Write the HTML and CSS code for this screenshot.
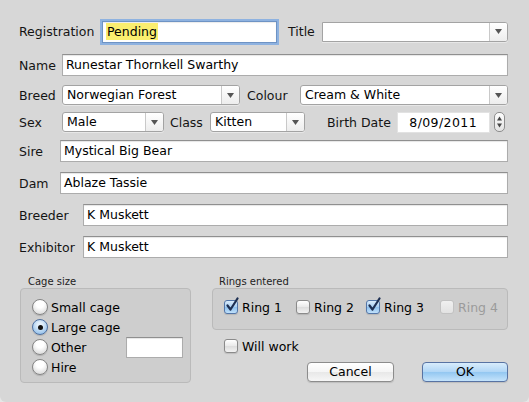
FILE: index.html
```html
<!DOCTYPE html>
<html>
<head>
<meta charset="utf-8">
<link rel="stylesheet" href="styles.css">
</head>
<body>
<div class="dialog">
  <div class="row r1">
    <span class="lbl w-reg">Registration</span>
    <div class="field focus reg"><span class="hl">Pending</span></div>
    <span class="lbl title-lbl">Title</span>
    <div class="popup combo grow">
      <span class="popup-text"></span>
      <span class="popup-arrow"><svg width="7" height="5" viewBox="0 0 7 5"><path d="M0 0H7L3.5 5Z" fill="#555"/></svg></span>
    </div>
  </div>
  <div class="row r2">
    <span class="lbl w-43">Name</span>
    <div class="field grow">Runestar Thornkell Swarthy</div>
  </div>
  <div class="row r3">
    <span class="lbl w-43">Breed</span>
    <div class="popup breed">
      <span class="popup-text">Norwegian Forest</span>
      <span class="popup-arrow"><svg width="7" height="5" viewBox="0 0 7 5"><path d="M0 0H7L3.5 5Z" fill="#555"/></svg></span>
    </div>
    <span class="lbl colour-lbl">Colour</span>
    <div class="popup grow">
      <span class="popup-text">Cream &amp; White</span>
      <span class="popup-arrow"><svg width="7" height="5" viewBox="0 0 7 5"><path d="M0 0H7L3.5 5Z" fill="#555"/></svg></span>
    </div>
  </div>
  <div class="row r4">
    <span class="lbl w-43">Sex</span>
    <div class="popup sex">
      <span class="popup-text">Male</span>
      <span class="popup-arrow"><svg width="7" height="5" viewBox="0 0 7 5"><path d="M0 0H7L3.5 5Z" fill="#555"/></svg></span>
    </div>
    <span class="lbl class-lbl">Class</span>
    <div class="popup klass">
      <span class="popup-text">Kitten</span>
      <span class="popup-arrow"><svg width="7" height="5" viewBox="0 0 7 5"><path d="M0 0H7L3.5 5Z" fill="#555"/></svg></span>
    </div>
    <span class="lbl bd-lbl">Birth Date</span>
    <div class="datefield">8/09/2011</div>
    <div class="stepper">
      <svg width="11" height="18" viewBox="0 0 11 18"><path d="M3 7.5H8L5.5 3.5Z" fill="#444"/><path d="M3 10.5H8L5.5 14.5Z" fill="#444"/></svg>
    </div>
  </div>
  <div class="row r5">
    <span class="lbl w-41">Sire</span>
    <div class="field grow">Mystical Big Bear</div>
  </div>
  <div class="row r6">
    <span class="lbl w-41">Dam</span>
    <div class="field grow">Ablaze Tassie</div>
  </div>
  <div class="row r7">
    <span class="lbl w-64">Breeder</span>
    <div class="field grow">K Muskett</div>
  </div>
  <div class="row r8">
    <span class="lbl w-64">Exhibitor</span>
    <div class="field grow">K Muskett</div>
  </div>

  <div class="bottom">
    <div class="cage-col">
      <div class="group-lbl cage-lbl">Cage size</div>
      <div class="group cage-box">
        <div class="radio-row"><span class="radio"></span><span class="opt">Small cage</span></div>
        <div class="radio-row"><span class="radio on"><span class="dot"></span></span><span class="opt">Large cage</span></div>
        <div class="radio-row"><span class="radio"></span><span class="opt">Other</span><div class="field small"></div></div>
        <div class="radio-row"><span class="radio"></span><span class="opt">Hire</span></div>
      </div>
    </div>
    <div class="right-col">
      <div class="group-lbl rings-lbl">Rings entered</div>
      <div class="group rings-box">
        <div class="ck-item"><span class="ck on"><svg class="tick" width="14" height="16" viewBox="0 0 14 16"><path d="M2.5 8.5L5.5 12.5L12.5 1.5" fill="none" stroke="#1d2f52" stroke-width="2.2" stroke-linecap="round" stroke-linejoin="round"/></svg></span><span class="opt">Ring 1</span></div>
        <div class="ck-item"><span class="ck"></span><span class="opt">Ring 2</span></div>
        <div class="ck-item"><span class="ck on"><svg class="tick" width="14" height="16" viewBox="0 0 14 16"><path d="M2.5 8.5L5.5 12.5L12.5 1.5" fill="none" stroke="#1d2f52" stroke-width="2.2" stroke-linecap="round" stroke-linejoin="round"/></svg></span><span class="opt">Ring 3</span></div>
        <div class="ck-item"><span class="ck dis"></span><span class="opt disabled">Ring 4</span></div>
      </div>
      <div class="willwork"><span class="ck"></span><span class="opt">Will work</span></div>
      <div class="buttons">
        <div class="btn">Cancel</div>
        <div class="btn ok">OK</div>
      </div>
    </div>
  </div>
</div>
</body>
</html>
```
FILE: styles.css
```css
html, body {
  margin: 0;
  padding: 0;
}
body {
  background: #e6e6e6;
  font-family: "DejaVu Sans", "Liberation Sans", sans-serif;
  font-size: 12.5px;
  color: #141414;
}
.dialog {
  width: 529px;
  height: 402px;
  box-sizing: border-box;
  background: #d7d7d7;
  border-radius: 0 0 6px 6px;
  padding: 20px 21px 0 19px;
  display: flex;
  flex-direction: column;
}
.row {
  display: flex;
  align-items: center;
}
.r1 { height: 23px; }
.r2 { height: 22px; margin-top: 11px; }
.r3 { height: 20px; margin-top: 9px; }
.r4 { height: 20px; margin-top: 7px; }
.r5 { height: 22px; margin-top: 8px; }
.r6, .r7, .r8 { height: 22px; margin-top: 10px; }

.lbl { flex: none; white-space: nowrap; }
.w-reg { width: 83px; }
.w-43 { width: 43px; }
.w-41 { width: 41px; }
.w-64 { width: 64px; }
.title-lbl { margin-left: 11px; width: 34px; }
.colour-lbl { margin-left: 7px; width: 53px; }
.class-lbl { margin-left: 6px; width: 40px; }
.bd-lbl { margin-left: 22px; width: 70px; }

.grow { flex: 1; }

.field {
  box-sizing: border-box;
  height: 22px;
  border: 1px solid #acacac;
  border-top-color: #8f8f8f;
  background: #fff;
  box-shadow: inset 0 1px 1px rgba(0,0,0,0.10);
  padding: 0 3px;
  line-height: 20px;
  white-space: nowrap;
  color: #000;
}
.field.focus {
  border-color: #6e93c4;
  box-shadow: 0 0 0 2px #8eb2e0, inset 0 1px 1px rgba(0,0,0,0.08);
}
.reg { width: 175px; }
.hl {
  background: #fbee6f;
  padding: 1px 1px;
}

.popup {
  box-sizing: border-box;
  display: flex;
  height: 20px;
  border: 1px solid #a3a3a3;
  border-radius: 3px;
  background: #fff;
  box-shadow: 0 1px 0 rgba(255,255,255,0.4);
}
.popup-text {
  flex: 1;
  padding-left: 4px;
  line-height: 18px;
  white-space: nowrap;
  color: #000;
}
.popup-arrow {
  flex: none;
  width: 17px;
  border-left: 1px solid #c9c9c9;
  border-radius: 0 2px 2px 0;
  background: linear-gradient(#ffffff, #ededed);
  display: flex;
  align-items: center;
  justify-content: center;
}
.combo { height: 20px; border-radius: 0 3px 3px 0; }
.breed { width: 178px; }
.sex { width: 102px; }
.klass { width: 95px; }

.datefield {
  box-sizing: border-box;
  width: 93px;
  height: 21px;
  background: #fff;
  border: 1px solid #e2e2e2;
  text-align: right;
  padding-right: 12px;
  line-height: 19px;
  color: #000;
  letter-spacing: 0.4px;
}
.stepper {
  box-sizing: border-box;
  margin-left: 4px;
  width: 11px;
  height: 20px;
  border: 1px solid #8d8d8d;
  border-radius: 5px;
  background: linear-gradient(#fdfdfd, #e3e3e3);
  display: flex;
  align-items: center;
  justify-content: center;
  overflow: hidden;
}
.stepper svg { flex: none; }

.bottom {
  display: flex;
  margin-top: 18px;
}
.cage-col {
  margin-left: 1px;
  width: 171px;
}
.right-col {
  margin-left: 21px;
  width: 296px;
}
.group-lbl {
  font-size: 10px;
  line-height: 12px;
  height: 12px;
  color: #222;
}
.cage-lbl { margin-left: 8px; }
.rings-lbl { margin-left: 7px; }
.group {
  box-sizing: border-box;
  background: #cecece;
  border: 1px solid #bababa;
  border-radius: 4px;
}
.cage-box {
  height: 95px;
  padding: 8px 7px 0 11px;
}
.radio-row {
  display: flex;
  align-items: center;
  height: 20px;
}
.radio {
  box-sizing: border-box;
  flex: none;
  width: 16px;
  height: 16px;
  border-radius: 50%;
  border: 1px solid #858585;
  background: radial-gradient(circle at 50% 30%, #ffffff 30%, #e4e4e4 70%, #d2d2d2);
  box-shadow: 0 1px 1px rgba(0,0,0,0.15);
  display: flex;
  align-items: center;
  justify-content: center;
}
.radio.on {
  border-color: #4d6e9e;
  background: radial-gradient(circle at 50% 35%, #e3f0fb 20%, #a9cdef 65%, #7fb3e6);
}
.dot {
  width: 5px;
  height: 5px;
  border-radius: 50%;
  background: #111;
}
.opt {
  margin-left: 3px;
  white-space: nowrap;
  color: #000;
}
.field.small {
  margin-left: auto;
  width: 57px;
  height: 21px;
}
.rings-box {
  height: 42px;
  padding: 10px 0 0 11px;
  display: grid;
  grid-template-columns: 72px 70px 74px auto;
  align-items: start;
}
.ck-item {
  display: flex;
  align-items: center;
  height: 16px;
}
.ck-item .opt, .willwork .opt { margin-left: 4px; }
.ck {
  box-sizing: border-box;
  position: relative;
  flex: none;
  width: 14px;
  height: 14px;
  border: 1px solid #8a8a8a;
  border-radius: 3px;
  background: linear-gradient(#ffffff, #e9e9e9 50%, #dcdcdc 51%, #f2f2f2);
  box-shadow: 0 1px 1px rgba(0,0,0,0.12);
}
.ck.on {
  border-color: #5376a8;
  background: linear-gradient(#d9ebfb, #a9cff2 50%, #8dc0ee 51%, #c0e0fa);
}
.ck.dis {
  border-color: #c2c2c2;
  background: linear-gradient(#f0f0f0, #e2e2e2);
  box-shadow: none;
}
.tick {
  position: absolute;
  left: 0;
  top: -4px;
}
.opt.disabled { color: #9b9b9b; }
.willwork {
  display: flex;
  align-items: center;
  height: 16px;
  margin-top: 8px;
  padding-left: 12px;
}
.buttons {
  display: flex;
  justify-content: flex-end;
  gap: 28px;
  margin-top: 8px;
}
.btn {
  box-sizing: border-box;
  width: 87px;
  height: 20px;
  border: 1px solid #8c8c8c;
  border-radius: 4px;
  background: linear-gradient(#ffffff, #f5f5f5 50%, #e8e8e8 51%, #f6f6f6);
  box-shadow: 0 1px 1px rgba(0,0,0,0.12);
  text-align: center;
  line-height: 18px;
  color: #000;
}
.btn.ok {
  width: 86px;
  border-color: #5873a3;
  background: linear-gradient(#d8ecfc, #b0d6f6 50%, #93c7f1 51%, #c4e3fb);
}
```
